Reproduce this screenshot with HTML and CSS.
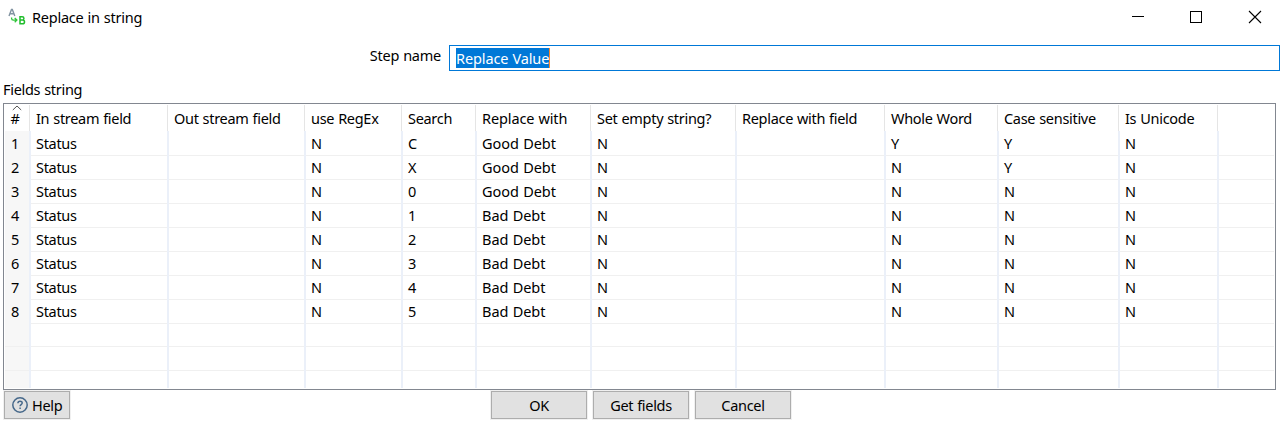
FILE: index.html
```html
<!DOCTYPE html>
<html lang="en">
<head>
<meta charset="utf-8">
<title>Replace in string</title>
<link rel="stylesheet" href="styles.css">
</head>
<body>
<div class="dialog">
  <header class="titlebar">
    <svg class="app-icon" width="18" height="18" viewBox="0 0 18 18" fill="none">
      <path d="M1 8 3.500 1.500h.8L6.800 8M1.900 5.800h4" stroke="#8193a1" stroke-width="1.400"/>
      <path d="M3.600 9.500v1q0 1.600 1.800 1.600H8.500M6.700 10l2.200 2.100-2.200 2.100" stroke="#2fc53a" stroke-width="1.300"/>
      <path d="M12 8.700v7h2.500c2.700 0 2.700-3.600 0-3.600H12h2.200c2.300 0 2.300-3.400 0-3.400z" stroke="#20bd2c" stroke-width="1.500"/>
    </svg>
    <span class="title">Replace in string</span>
    <svg class="controls" width="132" height="14" viewBox="0 0 132 14" fill="none" stroke="#000">
      <path d="M0 6.500h12M58.500 1.500h11v11h-11z" shape-rendering="crispEdges"/>
      <path d="m117 1 12 12m0-12-12 12" stroke-width="1.100"/>
    </svg>
  </header>
  <div class="form-row">
    <span class="label">Step name</span>
    <div class="input"><span class="selection">Replace Value</span></div>
  </div>
  <div class="section">Fields string</div>
  <div class="table">
    <div class="row head">
      <div class="num"><svg class="sort" width="10" height="6" viewBox="0 0 10 6" fill="none"><path d="M.8 5 5 1l4.200 4" stroke="#555"/></svg>#</div>
      <div>In stream field</div><div>Out stream field</div><div>use RegEx</div><div>Search</div><div class="wide">Replace with</div><div>Set empty string?</div><div>Replace with field</div><div>Whole Word</div><div>Case sensitive</div><div>Is Unicode</div><div></div>
    </div>
    <div class="row"><div class="num">1</div><div>Status</div><div></div><div>N</div><div>C</div><div class="wide">Good Debt</div><div>N</div><div></div><div>Y</div><div>Y</div><div>N</div><div></div></div>
    <div class="row"><div class="num">2</div><div>Status</div><div></div><div>N</div><div>X</div><div class="wide">Good Debt</div><div>N</div><div></div><div>N</div><div>Y</div><div>N</div><div></div></div>
    <div class="row"><div class="num">3</div><div>Status</div><div></div><div>N</div><div>0</div><div class="wide">Good Debt</div><div>N</div><div></div><div>N</div><div>N</div><div>N</div><div></div></div>
    <div class="row"><div class="num">4</div><div>Status</div><div></div><div>N</div><div>1</div><div class="wide">Bad Debt</div><div>N</div><div></div><div>N</div><div>N</div><div>N</div><div></div></div>
    <div class="row"><div class="num">5</div><div>Status</div><div></div><div>N</div><div>2</div><div class="wide">Bad Debt</div><div>N</div><div></div><div>N</div><div>N</div><div>N</div><div></div></div>
    <div class="row"><div class="num">6</div><div>Status</div><div></div><div>N</div><div>3</div><div class="wide">Bad Debt</div><div>N</div><div></div><div>N</div><div>N</div><div>N</div><div></div></div>
    <div class="row"><div class="num">7</div><div>Status</div><div></div><div>N</div><div>4</div><div class="wide">Bad Debt</div><div>N</div><div></div><div>N</div><div>N</div><div>N</div><div></div></div>
    <div class="row"><div class="num">8</div><div>Status</div><div></div><div>N</div><div>5</div><div class="wide">Bad Debt</div><div>N</div><div></div><div>N</div><div>N</div><div>N</div><div></div></div>
    <div class="row"><div class="num"></div><div></div><div></div><div></div><div></div><div></div><div></div><div></div><div></div><div></div><div></div><div></div></div>
    <div class="row"><div class="num"></div><div></div><div></div><div></div><div></div><div></div><div></div><div></div><div></div><div></div><div></div><div></div></div>
    <div class="row last"><div class="num"></div><div></div><div></div><div></div><div></div><div></div><div></div><div></div><div></div><div></div><div></div><div></div></div>
  </div>
  <footer class="actions">
    <div class="btn help">
      <svg width="16" height="16" viewBox="0 0 16 16" fill="none" stroke="#46688a"><circle cx="8" cy="8" r="7.200" stroke-width="1.500"/><path d="M5.900 6.200c.1-2.700 4.300-2.600 4.300-.2 0 1.600-2.100 1.500-2.100 3.300M8.100 10.600v1.500" stroke-width="1.500"/></svg>
      <span>Help</span>
    </div>
    <div class="main-actions">
      <div class="btn">OK</div>
      <div class="btn">Get fields</div>
      <div class="btn">Cancel</div>
    </div>
  </footer>
</div>
</body>
</html>
```
FILE: styles.css
```css
* { box-sizing: border-box; }
body {
  margin: 0;
  background: #fff;
  color: #000;
  font: 14.5px/20px "Noto Sans", "Open Sans", sans-serif;
  letter-spacing: -0.3px;
  word-spacing: 0.5px;
  white-space: nowrap;
}
.dialog { width: 1284px; height: 424px; overflow: hidden; }
.titlebar { display: flex; height: 45px; padding: 7px 20px 0 8px; align-items: flex-start; }
.app-icon { margin-top: 1px; }
.title { margin-left: 6px; letter-spacing: -0.23px; }
.controls { margin: 3px 0 0 auto; }
.form-row { display: flex; height: 26px; padding-right: 4px; }
.label { width: 449px; padding: 0 8px 0 0; text-align: right; letter-spacing: -0.25px; }
.input { flex: 1; border: 1px solid #0078d7; padding: 2px 6px; }
.selection { display: inline-block; height: 20px; background: #0078d7; color: #fff; border-right: 1px solid #ff8728; letter-spacing: -0.12px; }
.section { height: 32px; padding: 8px 0 0 3px; }
.table { width: 1273px; height: 287px; margin-left: 3px; border: 1px solid #828790; padding: 1px; }
.row {
  display: grid;
  grid-template-columns: 24px 138px 137px 97px 74px 115px 145px 149px 113px 121px 99px 1fr;
  height: 24px;
  line-height: 25px;
}
.row > div { border-left: 2px solid #ebf0f9; padding-left: 5px; background: linear-gradient(#f0f0f0, #f0f0f0) bottom / 100% 1px no-repeat; }
.row > .num { position: relative; border-left: 0; padding: 0 4px 0 0; background-color: #f7f7f7; text-align: center; }
.row > .wide { letter-spacing: -0.03px; }
.head { height: 26px; line-height: 27px; }
.head > div { border-left: 1px solid #e5e5e5; padding-left: 6px; background: none; }
.head > .wide { letter-spacing: -0.12px; }
.head > .num { background: none; }
.sort { position: absolute; left: 7px; top: 0; }
.last { height: 17px; }
.last > div { background-image: none; }
.actions { display: flex; padding: 1px 0 0 4px; }
.btn { width: 96px; height: 28px; border: 1px solid #adadad; background: #e1e1e1; box-shadow: 0 0 0 1px #f0f0f0; text-align: center; line-height: 27px; }
.help { display: flex; width: 66px; padding-left: 7px; gap: 4px; align-items: center; }
.main-actions { display: flex; gap: 6px; margin-left: 421px; }
```
